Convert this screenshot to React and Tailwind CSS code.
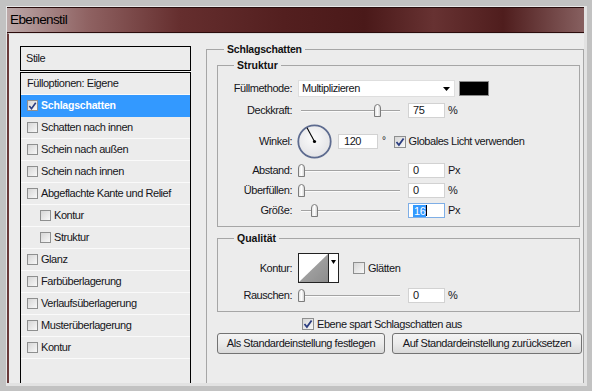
import React from "react";

function Check({ checked, big }) {
  return (
    <span
      className={
        big
          ? "inline-flex w-[12px] h-[12px] shrink-0 border border-[#8e8f8f] bg-gradient-to-br from-[#d6d6d6] to-[#f8f8f8] items-center justify-center"
          : "inline-flex w-[11px] h-[11px] shrink-0 border border-[#8e8f8f] bg-gradient-to-br from-[#d6d6d6] to-[#f8f8f8] items-center justify-center"
      }
    >
      {checked && (
        <svg width="10" height="10" viewBox="0 0 10 10">
          <path d="M1.5 5 L3.9 8 L8.6 1.4" fill="none" stroke="#2b3d80" strokeWidth="1.8" />
        </svg>
      )}
    </span>
  );
}

function Thumb() {
  return (
    <svg width="9" height="13" viewBox="0 0 9 13">
      <defs>
        <linearGradient id="tg" x1="0" y1="0" x2="1" y2="0">
          <stop offset="0" stopColor="#e2e2e2" />
          <stop offset="0.5" stopColor="#fdfdfd" />
          <stop offset="1" stopColor="#cfcfcf" />
        </linearGradient>
      </defs>
      <path d="M1.5 12.5 V4 Q1.5 0.5 4.5 0.5 Q7.5 0.5 7.5 4 V12.5 Z" fill="url(#tg)" stroke="#7c7c7c" />
    </svg>
  );
}

function Slider({ pos }) {
  return (
    <div className="relative w-[103px] h-[15px] ml-[5px] flex items-center">
      <div className="ml-[4px] flex-1 h-[2px] border-t border-[#a3a3a3] border-b border-b-[#fbfbfb]" />
      <div className="absolute top-[1px]" style={{ left: pos }}>
        <Thumb />
      </div>
    </div>
  );
}

function NumInput({ value, selected }) {
  return (
    <div
      className={
        selected
          ? "ml-[8px] w-[37px] h-[15px] bg-white border border-[#7eaee6] flex items-center pl-[4px]"
          : "ml-[8px] w-[37px] h-[15px] bg-white border border-[#d2d2d2] flex items-center pl-[4px]"
      }
    >
      {selected ? (
        <>
          <span className="bg-[#3399ff] text-white leading-[12px] px-[1px]">{value}</span>
          <span className="w-px h-[11px] bg-black" />
        </>
      ) : (
        <span>{value}</span>
      )}
    </div>
  );
}

function Label({ children }) {
  return <div className="w-[74px] shrink-0 text-right">{children}</div>;
}

function SliderRow({ label, pos, value, unit, selected, mt }) {
  return (
    <div className={"flex items-center h-[15px] " + mt}>
      <Label>{label}</Label>
      <Slider pos={pos} />
      <NumInput value={value} selected={selected} />
      <span className="ml-[3px]">{unit}</span>
    </div>
  );
}

function Arrow() {
  return (
    <svg width="7" height="4" viewBox="0 0 7 4">
      <path d="M0 0 H7 L3.5 4 Z" fill="#000" />
    </svg>
  );
}

const rows = [
  { t: "Fülloptionen: Eigene", nobox: true },
  { t: "Schlagschatten", checked: true, sel: true },
  { t: "Schatten nach innen" },
  { t: "Schein nach außen" },
  { t: "Schein nach innen" },
  { t: "Abgeflachte Kante und Relief" },
  { t: "Kontur", indent: true },
  { t: "Struktur", indent: true },
  { t: "Glanz" },
  { t: "Farbüberlagerung" },
  { t: "Verlaufsüberlagerung" },
  { t: "Musterüberlagerung" },
  { t: "Kontur" },
];

export default function App() {
  return (
    <div className="w-[592px] h-[391px] bg-[#c2c2c2] pt-[6px] pl-[6px] pr-[5px] pb-[5px] overflow-hidden font-['Liberation_Sans',Arial,sans-serif] text-[11px] tracking-[-0.45px] text-[#151520]">
      <div className="w-full h-full border-l border-t border-[#e6e6e6] border-r-[3px] border-b-[3px] border-r-[#e2e2e2] border-b-[#e2e2e2] flex flex-col">
        {/* title bar */}
        <div className="h-[26px] shrink-0 border-t border-[#2a0e0e] border-b border-b-[#2c0c0c] bg-[linear-gradient(to_right,#bca8a8_0%,#8f6262_14%,#652e2e_30%,#531f1f_48%,#4a1919_62%,#673232_74%,#4f1d1d_86%,#876060_100%)] flex items-center pl-[3px]">
          <span className="text-[13.5px] tracking-[-0.6px] text-black">Ebenenstil</span>
        </div>
        {/* content */}
        <div className="flex-1 min-h-0 flex bg-[#ececec] border-l-2 border-[#6a3a3a] border-t border-t-[#dcdcdc] overflow-hidden">
          {/* left list */}
          <div className="w-[171px] ml-[11px] mt-[12px] flex flex-col shrink-0">
            <div className="h-[25px] border border-black flex items-center pl-[5px]">Stile</div>
            <div className="h-px bg-[#f6f6f6]" />
            <div className="flex-1 border-x border-t border-black">
              {rows.map((r, i) => (
                <div
                  key={i}
                  className={
                    r.sel
                      ? "h-[22px] flex items-center bg-[#3399ff] text-white font-bold text-[10.5px] tracking-[-0.2px] pl-[6px] border-b border-[#3399ff]"
                      : r.indent
                      ? "h-[22px] flex items-center pl-[19px] border-b border-[#fafafa]"
                      : "h-[22px] flex items-center pl-[6px] border-b border-[#fafafa]"
                  }
                >
                  {!r.nobox && (
                    <span className="mr-[3px] flex">
                      <Check checked={r.checked} />
                    </span>
                  )}
                  <span>{r.t}</span>
                </div>
              ))}
            </div>
          </div>

          {/* right */}
          <div className="flex-1 ml-[15px] pt-[8px] flex flex-col min-w-0">
            <fieldset className="flex-1 border-l border-t border-r border-[#a6a6a6]">
              <legend className="ml-[17px] px-[3px] font-bold text-[10.5px] tracking-[-0.2px] leading-[14px] text-[#111]">
                Schlagschatten
              </legend>

              <fieldset className="ml-[10px] mr-[3px] mt-[2px] border border-[#a6a6a6] pb-[8px]">
                <legend className="ml-[16px] px-[3px] font-bold text-[10.5px] tracking-[0px] leading-[14px] text-[#111]">
                  Struktur
                </legend>

                <div className="flex items-center h-[17px] mt-[8px]">
                  <Label>Füllmethode:</Label>
                  <div className="ml-[6px] w-[157px] h-[17px] bg-white border border-[#dedede] flex items-center pl-[3px] pr-[4px]">
                    <span className="flex-1">Multiplizieren</span>
                    <Arrow />
                  </div>
                  <div className="ml-[4px] w-[30px] h-[15px] bg-black border border-[#8a8a8a]" />
                </div>

                <SliderRow label="Deckkraft:" pos={76} value="75" unit="%" mt="mt-[6px]" />

                <div className="flex items-center h-[35px] mt-[6px]">
                  <Label>Winkel:</Label>
                  <div className="ml-[5px] w-[35px] h-[35px]">
                    <svg width="35" height="35" viewBox="0 0 35 35">
                      <defs>
                        <radialGradient id="dg" cx="0.45" cy="0.4" r="0.6">
                          <stop offset="0" stopColor="#fbfbfb" />
                          <stop offset="1" stopColor="#e3e3e6" />
                        </radialGradient>
                      </defs>
                      <circle cx="17.5" cy="17.5" r="16.2" fill="url(#dg)" stroke="#5d6b8f" strokeWidth="1.8" />
                      <line x1="17.5" y1="17.5" x2="10" y2="3.8" stroke="#000" strokeWidth="1.1" />
                      <circle cx="17.5" cy="17.5" r="1.6" fill="#000" />
                    </svg>
                  </div>
                  <div className="ml-[6px] w-[40px] h-[15px] bg-white border border-[#d2d2d2] flex items-center pl-[5px]">
                    120
                  </div>
                  <span className="ml-[4px] self-start mt-[9px] text-[10px]">°</span>
                  <span className="ml-[8px] flex">
                    <Check checked big />
                  </span>
                  <span className="ml-[3px]">Globales Licht verwenden</span>
                </div>

                <SliderRow label="Abstand:" pos={0} value="0" unit="Px" mt="mt-[4px]" />
                <SliderRow label="Überfüllen:" pos={0} value="0" unit="%" mt="mt-[5px]" />
                <SliderRow label="Größe:" pos={13} value="16" unit="Px" selected mt="mt-[5px]" />
              </fieldset>

              <fieldset className="ml-[10px] mr-[3px] mt-[4px] border border-[#a6a6a6] pb-[8px]">
                <legend className="ml-[16px] px-[3px] font-bold text-[10.5px] tracking-[0px] leading-[14px] text-[#111]">
                  Qualität
                </legend>
                <div className="flex items-center h-[30px] mt-[8px]">
                  <Label>Kontur:</Label>
                  <div className="ml-[6px] w-[41px] h-[30px] border border-[#222] bg-white flex">
                    <svg width="29" height="28" viewBox="0 0 29 28">
                      <defs>
                        <linearGradient id="kg" x1="0" y1="0" x2="1" y2="1">
                          <stop offset="0" stopColor="#b0b0b0" />
                          <stop offset="1" stopColor="#8c8c8c" />
                        </linearGradient>
                      </defs>
                      <polygon points="0,28 29,0 29,28" fill="url(#kg)" />
                    </svg>
                    <div className="flex-1 border-l border-[#222] flex justify-center pt-[6px]">
                      <svg width="5" height="4" viewBox="0 0 5 4">
                        <path d="M0 0 H5 L2.5 4 Z" fill="#000" />
                      </svg>
                    </div>
                  </div>
                  <span className="ml-[14px] flex">
                    <Check big />
                  </span>
                  <span className="ml-[3px]">Glätten</span>
                </div>
                <SliderRow label="Rauschen:" pos={0} value="0" unit="%" mt="mt-[5px]" />
              </fieldset>

              <div className="flex items-center h-[12px] mt-[6px] ml-[95px]">
                <Check checked big />
                <span className="ml-[3px]">Ebene spart Schlagschatten aus</span>
              </div>

              <div className="flex mt-[3px] ml-[10px]">
                <div className="w-[168px] h-[21px] rounded-[3px] border border-[#737373] bg-gradient-to-b from-[#f4f4f4] via-[#ebebeb] to-[#d9d9d9] flex items-center justify-center">
                  Als Standardeinstellung festlegen
                </div>
                <div className="ml-[7px] w-[190px] h-[21px] rounded-[3px] border border-[#737373] bg-gradient-to-b from-[#f4f4f4] via-[#ebebeb] to-[#d9d9d9] flex items-center justify-center">
                  Auf Standardeinstellung zurücksetzen
                </div>
              </div>
            </fieldset>
          </div>
        </div>
      </div>
    </div>
  );
}
